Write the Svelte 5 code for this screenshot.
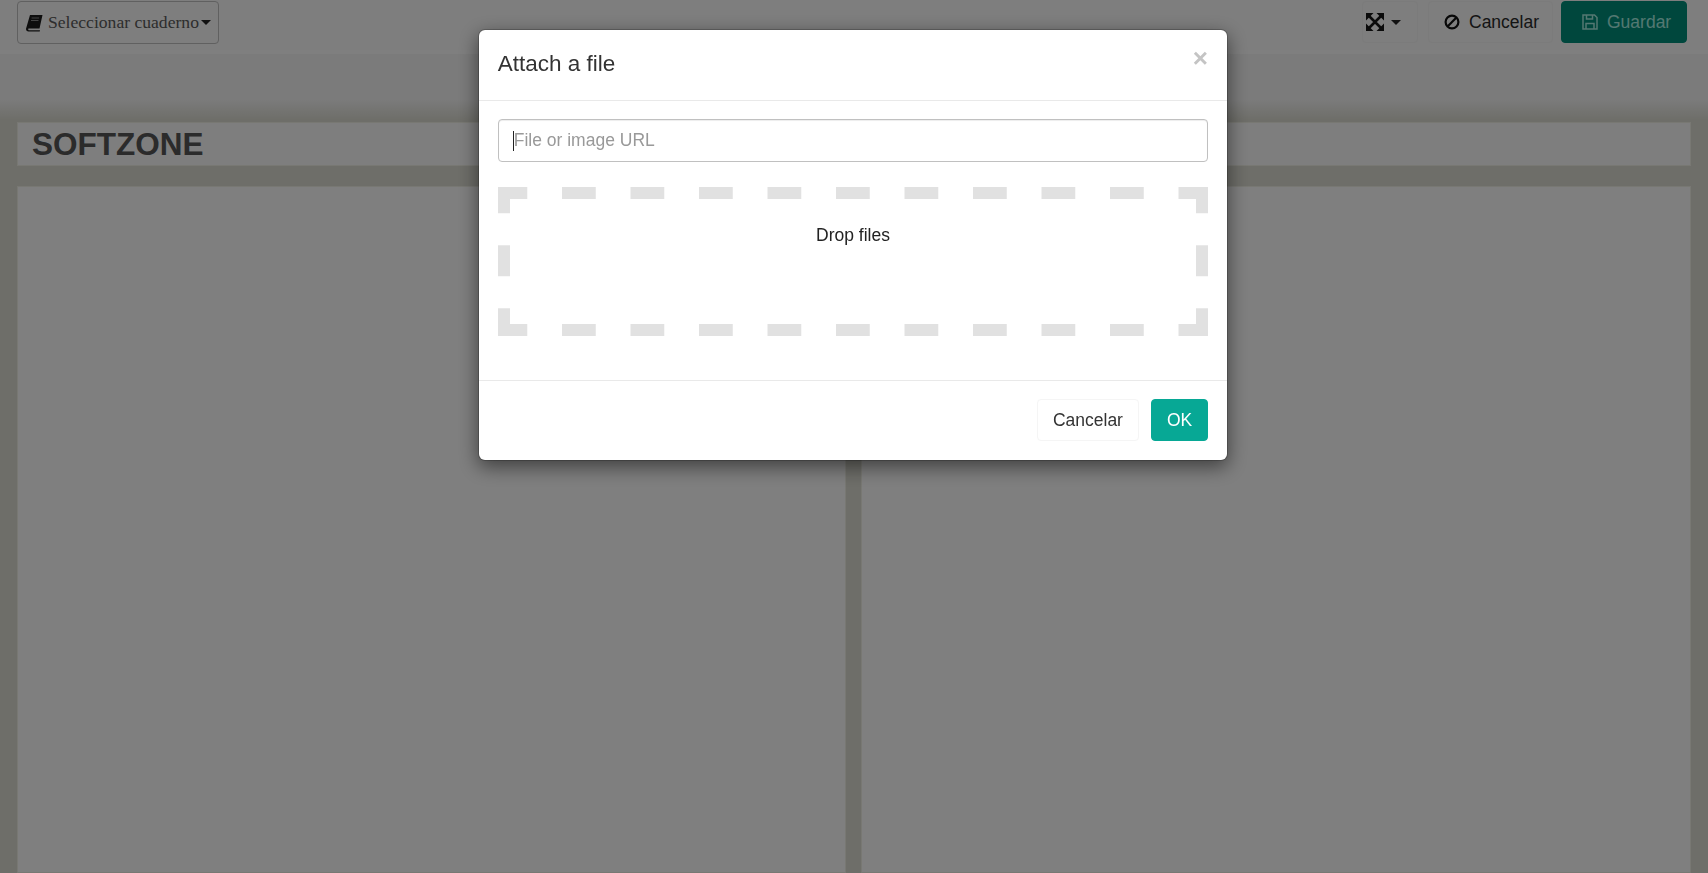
<script>
	let url = $state('');
	let open = $state(true);
</script>

<div class="page">
	<header class="topbar">
		<button class="notebook">
			<svg class="book" viewBox="0 0 18 18" width="18" height="18">
				<path d="M5 1h12.500l-3 13.500H4.200c-.9 0-1.200.6-.9 1.200.2.4.6.6 1.100.6h10.600l-.3 1.200H3.600C2 17.500.8 16.400 1 14.800z" fill="#1c1c1c" />
				<path d="M6.600 4h7.500M6 6.500h7.500" stroke="#8a8a8a" stroke-width="1" />
			</svg>
			Seleccionar cuaderno<span class="caret"></span>
		</button>
		<div class="actions">
			<button class="btn expand">
				<svg viewBox="0 0 18 18" width="18" height="18">
					<path d="M0 0h7.500L0 7.500zM18 0v7.500L10.500 0zM0 18v-7.500L7.500 18zM18 18h-7.500l7.500-7.500z" fill="#161616" />
					<path d="M3 3l12 12M15 3L3 15" stroke="#161616" stroke-width="2.600" />
				</svg>
				<span class="caret small"></span>
			</button>
			<button class="btn cancel">
				<svg viewBox="0 0 16 16" width="16" height="16">
					<circle cx="8" cy="8" r="6.400" fill="none" stroke="#111" stroke-width="2.200" />
					<path d="M3.800 12.200l8.400-8.400" stroke="#111" stroke-width="2.200" />
				</svg>
				Cancelar
			</button>
			<button class="btn save">
				<svg viewBox="0 0 16 16" width="16" height="16" fill="none" stroke="#a8f0e4" stroke-width="1.500">
					<path d="M1 1h11.500L15 3.500V15H1z" />
					<path d="M4.500 1v4h6V1M4 15V9.500h8V15" />
				</svg>
				Guardar
			</button>
		</div>
	</header>

	<main class="content">
		<h1 class="title">SOFTZONE</h1>
		<div class="panels">
			<section class="panel"></section>
			<section class="panel"></section>
		</div>
	</main>
</div>

{#if open}
	<div class="backdrop">
		<div class="modal">
			<div class="modal-header">
				<h4>Attach a file</h4>
				<button class="close" onclick={() => (open = false)}>×</button>
			</div>
			<div class="modal-body">
				<div class="url-field">
					<input type="text" placeholder="File or image URL" bind:value={url} />
					<span class="cursor"></span>
				</div>
				<div class="dropzone">Drop files</div>
			</div>
			<div class="modal-footer">
				<button class="footer-btn" onclick={() => (open = false)}>Cancelar</button>
				<button class="footer-btn ok" onclick={() => (open = false)}>OK</button>
			</div>
		</div>
	</div>
{/if}

<style>
	:global(body) {
		margin: 0;
		font-family: 'Liberation Sans', Arial, sans-serif;
		overflow: hidden;
	}

	button {
		font-family: inherit;
		cursor: pointer;
	}

	.page {
		height: 873px;
		display: flex;
		flex-direction: column;
		overflow: hidden;
		background: #dcdcd2;
	}

	/* top toolbar */
	.topbar {
		height: 54px;
		box-sizing: border-box;
		padding: 1px 21px 0 17px;
		display: flex;
		justify-content: space-between;
		align-items: flex-start;
		background: #fcfcfc;
		border-bottom: 4px solid #fff;
	}

	.notebook {
		width: 202px;
		height: 43px;
		box-sizing: border-box;
		padding: 0 0 0 7px;
		display: flex;
		align-items: center;
		gap: 5px;
		background: #fcfcfc;
		border: 1px solid #c0c0c0;
		border-radius: 4px;
		font-family: 'Liberation Serif', 'Times New Roman', serif;
		font-size: 17.600px;
		color: #5a5a5a;
		white-space: nowrap;
	}

	.book {
		flex: none;
	}

	.caret {
		width: 0;
		height: 0;
		margin-left: -3px;
		border-left: 5px solid transparent;
		border-right: 5px solid transparent;
		border-top: 5px solid #222;
	}

	.caret.small {
		margin-left: 0;
	}

	.actions {
		display: flex;
		align-items: flex-start;
	}

	.btn {
		height: 42px;
		box-sizing: border-box;
		display: flex;
		align-items: center;
		font-size: 17.500px;
		background: #fcfcfc;
		border: 1px solid #f6f6f6;
		border-radius: 4px;
		color: #2a2a2a;
	}

	.expand {
		width: 56px;
		padding: 0 0 0 3px;
		gap: 7px;
		margin-right: 10px;
	}

	.cancel {
		width: 125px;
		padding: 0 0 0 15px;
		gap: 9px;
		margin-right: 8px;
	}

	.save {
		width: 126px;
		padding: 0 0 0 20px;
		gap: 9px;
		background: #008f7a;
		border-color: #008f7a;
		color: #a8f0e4;
	}

	/* notebook area */
	.content {
		flex: 1;
		min-height: 0;
		box-sizing: border-box;
		padding: 68px 17px 0;
		display: flex;
		flex-direction: column;
		gap: 20px;
		background: linear-gradient(#f6f6f6 46px, #dcdcd2 66px);
	}

	.title {
		margin: 0;
		height: 44px;
		box-sizing: border-box;
		padding-left: 14px;
		background: #fcfcfc;
		border: 1px solid #f0f0e6;
		font-size: 31.500px;
		line-height: 42px;
		font-weight: 700;
		color: #565656;
	}

	.panels {
		flex: 1;
		display: grid;
		grid-template-columns: 829px 830px;
		gap: 15px;
	}

	.panel {
		background: #fff;
		border: 1px solid #f0f0e6;
	}

	/* modal */
	.backdrop {
		position: fixed;
		inset: 0;
		padding-right: 2px;
		display: flex;
		justify-content: center;
		align-items: flex-start;
		background: rgba(0, 0, 0, 0.5);
	}

	.modal {
		width: 750px;
		box-sizing: border-box;
		margin-top: 29px;
		background: #fff;
		border: 1px solid rgba(0, 0, 0, 0.2);
		background-clip: padding-box;
		border-radius: 7px;
		box-shadow: 0 6px 19px rgba(0, 0, 0, 0.5);
	}

	.modal-header {
		height: 71px;
		box-sizing: border-box;
		padding: 18px 19px 0 18.750px;
		display: flex;
		justify-content: space-between;
		align-items: flex-start;
		border-bottom: 1px solid #e9e9e9;
	}

	.modal-header h4 {
		margin: 0;
		font-size: 22.500px;
		line-height: 32px;
		font-weight: 400;
		color: #333;
	}

	.close {
		margin-top: -3px;
		padding: 0;
		background: none;
		border: 0;
		font-size: 26px;
		line-height: 26px;
		font-weight: 700;
		color: #c4c4c4;
	}

	.modal-body {
		padding: 18px 18.750px 44px;
	}

	.url-field {
		position: relative;
		margin-bottom: 25px;
	}

	input {
		display: block;
		width: 100%;
		height: 43px;
		box-sizing: border-box;
		padding: 0 15px;
		border: 1px solid #c0c0c0;
		border-radius: 4px;
		box-shadow: inset 0 1px 1px rgba(0, 0, 0, 0.075);
		font-family: inherit;
		font-size: 17.500px;
		color: #555;
		outline: none;
	}

	input::placeholder {
		color: #999;
		opacity: 1;
	}

	.cursor {
		position: absolute;
		left: 15.500px;
		top: 12px;
		width: 1px;
		height: 20px;
		background: #222;
	}

	.dropzone {
		height: 149px;
		box-sizing: border-box;
		padding-top: 36px;
		text-align: center;
		font-size: 17.500px;
		line-height: 25px;
		color: #222;
		background:
			linear-gradient(90deg, #e1e1e1 34px, transparent 34px) 64px 0 / 68.500px 12px repeat-x,
			linear-gradient(90deg, #e1e1e1 34px, transparent 34px) 64px 100% / 68.500px 12px repeat-x,
			linear-gradient(#e1e1e1 31.500px, transparent 31.500px) 0 58.250px / 12px 63px repeat-y,
			linear-gradient(#e1e1e1 31.500px, transparent 31.500px) 100% 58.250px / 12px 63px repeat-y;
	}

	.modal-footer {
		height: 80px;
		box-sizing: border-box;
		padding: 18px 18.750px 0;
		display: flex;
		justify-content: flex-end;
		gap: 12px;
		border-top: 1px solid #e9e9e9;
	}

	.footer-btn {
		height: 42px;
		box-sizing: border-box;
		padding: 0 15px;
		background: #fff;
		border: 1px solid #f5f5f5;
		border-radius: 4px;
		font-size: 17.500px;
		color: #333;
	}

	.footer-btn.ok {
		background: #07a895;
		border-color: #07a895;
		color: #fff;
	}
</style>
